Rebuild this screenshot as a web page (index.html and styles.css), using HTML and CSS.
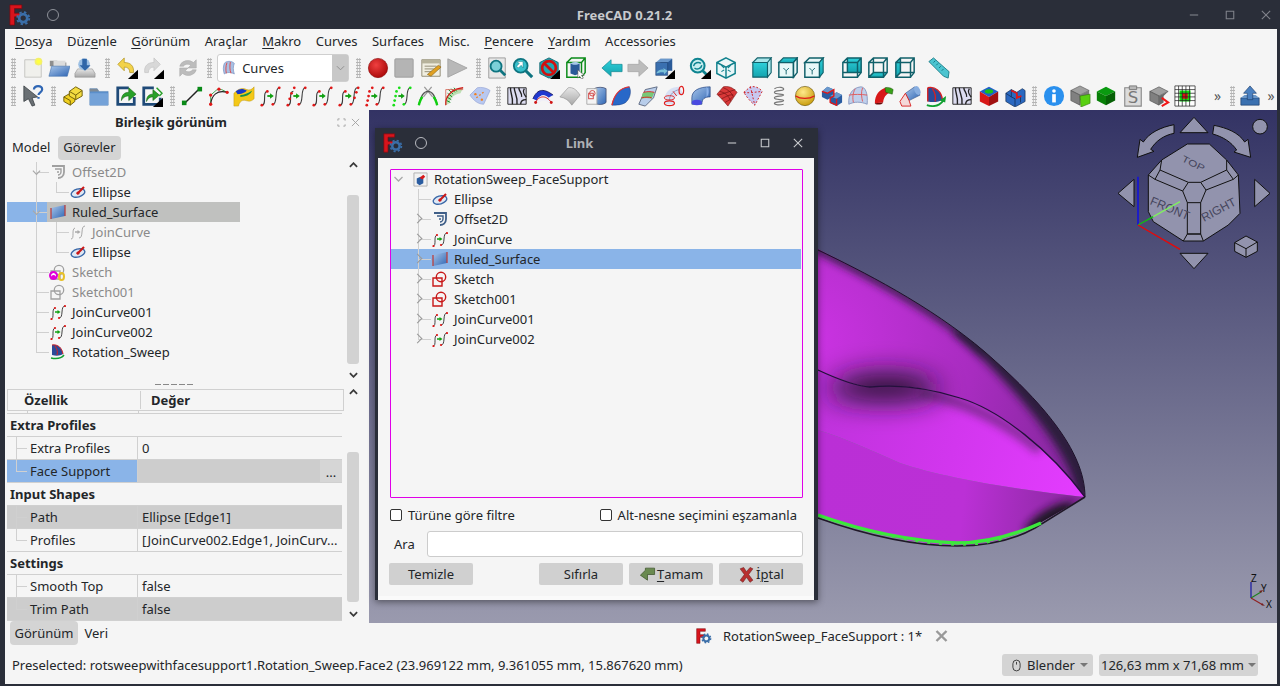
FILE: index.html

```html
<!DOCTYPE html>
<html lang="tr">
<head>
  <meta charset="UTF-8" />
  <title>FreeCAD 0.21.2</title>
  <link rel="stylesheet" href="styles.css">
</head>
<body>

  <!-- icon sheet, everything below reuses these -->
  <svg class="sheet" xmlns="http://www.w3.org/2000/svg">
    <defs>
      <linearGradient id="gBlue" x1="0" y1="0" x2="1" y2="1"><stop offset="0" stop-color="#a9c6ea"/><stop offset="1" stop-color="#2f66b4"/></linearGradient>
      <linearGradient id="gTeal" x1="0" y1="0" x2="0" y2="1"><stop offset="0" stop-color="#2ed0da"/><stop offset="1" stop-color="#14a3ae"/></linearGradient>
      <linearGradient id="gGrey" x1="0" y1="0" x2="0" y2="1"><stop offset="0" stop-color="#e6e6e6"/><stop offset="1" stop-color="#a8a8a8"/></linearGradient>
      <radialGradient id="gRed" cx=".4" cy=".35" r=".7"><stop offset="0" stop-color="#f04040"/><stop offset="1" stop-color="#a80808"/></radialGradient>
      <radialGradient id="gBall" cx=".4" cy=".3" r=".75"><stop offset="0" stop-color="#ffe98a"/><stop offset="1" stop-color="#c79a08"/></radialGradient>
    </defs>

    <symbol id="fc" viewBox="0 0 24 24">
      <path d="M1 1h13v4H6v5h7v4H6v9H1z" fill="#d8141c" stroke="#7a0a10" stroke-width=".8"/>
      <g transform="translate(15.5 15.5)"><circle r="4.4" fill="none" stroke="#3a6ea8" stroke-width="3"/><circle r="6.6" fill="none" stroke="#3a6ea8" stroke-width="2" stroke-dasharray="2.6 2.6"/></g>
    </symbol>

    <symbol id="new" viewBox="0 0 24 24"><path d="M3 3h16l2 2v17H3z" fill="#f0f0ec" stroke="#c4c4c0"/><circle cx="18" cy="5" r="4.2" fill="#f4f06a"/><circle cx="18" cy="5" r="2.4" fill="#ffff40"/></symbol>
    <symbol id="open" viewBox="0 0 24 24"><path d="M2 4h8l2 2h8v4H2z" fill="#8e8e8e"/><path d="M6 4h13v6H6z" fill="#dcdcdc"/><path d="M4 10h20l-3 11H1z" fill="url(#gBlue)" stroke="#3d6ca8" stroke-width=".6"/></symbol>
    <symbol id="save" viewBox="0 0 24 24"><path d="M4 13h16l3 5v4H1v-4z" fill="url(#gGrey)" stroke="#8a8a8a" stroke-width=".6"/><circle cx="11" cy="8" r="6.4" fill="#9cc0e4"/><path d="M9 2h5v7h4l-6 6-6-6h3z" fill="#2f66a8"/></symbol>
    <symbol id="undo" viewBox="0 0 24 24"><path d="M9 1 2 8l7 7v-4c4 0 6 2 6 6h4c1-7-3-11-10-11z" fill="#f2d24a" stroke="#a98a10" stroke-width=".7"/><path d="M24 14v10H13z"/></symbol>
    <symbol id="redo" viewBox="0 0 24 24"><path d="M13 1l7 7-7 7v-4c-4 0-6 2-6 6H3C2 10 6 6 13 6z" fill="#d8d8d8" stroke="#c0c0c0" stroke-width=".7"/><path d="M24 14v10H13z"/></symbol>
    <symbol id="refresh" viewBox="0 0 24 24"><path d="M3 10a9 8 0 0 1 15-4l3-3v9h-9l3-3a5 4 0 0 0-8 1zM21 14a9 8 0 0 1-15 4l-3 3v-9h9l-3 3a5 4 0 0 0 8-1z" fill="#bcbcbc" stroke="#a8a8a8" stroke-width=".6"/></symbol>
    <symbol id="curves" viewBox="0 0 24 24"><path d="M5 5C8 1 16 1 20 5c-2 5-2 10 0 16-5-3-11-3-15 0-2-5-2-11 0-16z" fill="#a8c0e4" stroke="#7890c0"/><path d="M9 4c-2 5-2 11-1 16M14 3c-1 6-1 12 1 17" fill="none" stroke="#e04848" stroke-width="1.4"/></symbol>
    <symbol id="record" viewBox="0 0 24 24"><circle cx="12" cy="12" r="10.5" fill="url(#gRed)" stroke="#8c0a0a" stroke-width=".7"/></symbol>
    <symbol id="stop" viewBox="0 0 24 24"><rect x="2" y="2" width="20" height="20" rx="1" fill="#b4b4b4" stroke="#9c9c9c"/></symbol>
    <symbol id="macro" viewBox="0 0 24 24"><path d="M2 3h20v18H2z" fill="#f0eee0" stroke="#8c8870"/><path d="M2 3h20v4H2z" fill="#b6b29a"/><path d="M5 10h13M5 13h10M5 16h8" stroke="#8c8870"/><path d="M8 19 20 9l3 2-11 10z" fill="#e0a020" stroke="#7a5810" stroke-width=".6"/></symbol>
    <symbol id="play" viewBox="0 0 24 24"><path d="M2 2l21 10L2 22z" fill="#b8b8b8" stroke="#a4a4a4"/></symbol>

    <symbol id="fit-all" viewBox="0 0 24 24"><path d="M3 1h18v22H3z" fill="#e8e8e8" stroke="#9a9a9a"/><circle cx="11" cy="10" r="6" fill="#7cd0d8" stroke="#0e7480" stroke-width="2"/><path d="M15 14l6 6" stroke="#0e7480" stroke-width="3"/></symbol>
    <symbol id="fit-sel" viewBox="0 0 24 24"><circle cx="9.5" cy="9.5" r="7.5" fill="#38c0cc" stroke="#0e7480" stroke-width="2"/><path d="M15 15l7 7" stroke="#0e7480" stroke-width="3.4"/><path d="M5 5h7v7l-2-3-3 3-2-2 3-3z" fill="#fff" stroke="#0e7480" stroke-width=".5"/></symbol>
    <symbol id="no-draw" viewBox="0 0 24 24"><path d="M12 1l10 5v12l-10 5-10-5V6z" fill="#1fa8b4" stroke="#0e6670"/><circle cx="12" cy="12" r="7.5" fill="none" stroke="#d01010" stroke-width="3"/><path d="M7 7l10 10" stroke="#d01010" stroke-width="3"/><path d="M24 14v10H13z"/></symbol>
    <symbol id="bbox" viewBox="0 0 24 24"><path d="M2 6h16v16H2zM2 6l5-5h15v16l-4 5M18 6l4-5" fill="none" stroke="#0a8a18" stroke-width="1.6"/><path d="M6 7h10v11l-5 2-5-2z" fill="#2a5a98"/><path d="M6 7c3-2 7-2 10 0-3 2-7 2-10 0z" fill="#a8c8e8"/><path d="M14 14v9l2-2 2 3 2-1-2-3h3z" fill="#fff" stroke="#444" stroke-width=".6"/></symbol>
    <symbol id="arr-l" viewBox="0 0 24 24"><path d="M1 12 11 3v5h12v8H11v5z" fill="url(#gTeal)" stroke="#1a8a96" stroke-width=".8"/></symbol>
    <symbol id="arr-r" viewBox="0 0 24 24"><path d="M23 12 13 3v5H1v8h12v5z" fill="#bcbcbc" stroke="#a4a4a4" stroke-width=".8"/></symbol>
    <symbol id="nav" viewBox="0 0 24 24"><path d="M8 2h13v13H8z" fill="#2a5a98"/><path d="M3 6l5-4h13l-5 4z" fill="#6a98cc"/><path d="M3 6h13v14H3z" fill="#3a70b0" stroke="#1a3a68" stroke-width=".6"/><path d="M4 17c2-3 5-4 8-3l-1-2 5 3-4 4v-2c-3-1-5 0-8 1z" fill="#7ac0d8"/><path d="M24 14v10H13z"/></symbol>
    <symbol id="sync" viewBox="0 0 24 24"><circle cx="9.5" cy="9.5" r="7.5" fill="#c8eef0" stroke="#0e8490" stroke-width="2.2"/><path d="M5 10a5 5 0 0 1 8-3M14 9a5 5 0 0 1-8 3" fill="none" stroke="#0e8490" stroke-width="1.6"/><path d="M15 15l6 6" stroke="#0e8490" stroke-width="3"/><path d="M24 14v10H13z"/></symbol>
    <symbol id="iso" viewBox="0 0 24 24"><path d="M12 1l10 5v12l-10 5L2 18V6zM2 6l10 5 10-5M12 11v12" fill="#e8f6f8" stroke="#10808c" stroke-width="1.6"/><path d="M7 9l3 3M17 9l-3 3M7 16l3-2M17 16l-3-2" stroke="#10808c" stroke-width="1.2"/></symbol>
    <symbol id="front" viewBox="0 0 24 24"><path d="M2 6h16v16H2z" fill="url(#gTeal)" stroke="#10606a" stroke-width="1.2"/><path d="M2 6l5-5h15l-4 5zM18 6l4-5v16l-4 5z" fill="#a8e6ea" stroke="#10606a" stroke-width="1.2"/></symbol>
    <symbol id="top" viewBox="0 0 24 24"><path d="M2 6h16v16H2z" fill="#e8f8f8" stroke="#10606a" stroke-width="1.6"/><path d="M2 6l5-5h15l-4 5z" fill="url(#gTeal)" stroke="#10606a" stroke-width="1.2"/><path d="M18 6l4-5v16l-4 5z" fill="#e8f8f8" stroke="#10606a" stroke-width="1.6"/><path d="M7 12l3 3M13 12l-3 3M10 15v4" stroke="#10606a"/></symbol>
    <symbol id="rgt" viewBox="0 0 24 24"><path d="M2 6h16v16H2zM2 6l5-5h15l-4 5z" fill="#e8f8f8" stroke="#10606a" stroke-width="1.6"/><path d="M18 6l4-5v16l-4 5z" fill="url(#gTeal)" stroke="#10606a" stroke-width="1.2"/><path d="M7 12l3 3M13 12l-3 3M10 15v4" stroke="#10606a"/></symbol>
    <symbol id="rear" viewBox="0 0 24 24"><path d="M7 1h15v16H7z" fill="url(#gTeal)"/><path d="M2 6h16v16H2zM2 6l5-5h15v16l-4 5M18 6l4-5M7 1v16H2M7 17h15" fill="none" stroke="#10606a" stroke-width="1.6"/></symbol>
    <symbol id="bot" viewBox="0 0 24 24"><path d="M2 22l5-5h15l-4 5z" fill="url(#gTeal)"/><path d="M2 6h16v16H2zM2 6l5-5h15v16l-4 5M18 6l4-5M7 1v16l-5 5M7 17h15" fill="none" stroke="#10606a" stroke-width="1.6"/></symbol>
    <symbol id="lft" viewBox="0 0 24 24"><path d="M2 6l5-5v16l-5 5z" fill="url(#gTeal)"/><path d="M2 6h16v16H2zM2 6l5-5h15v16l-4 5M18 6l4-5M7 1v16l-5 5M7 17h15" fill="none" stroke="#10606a" stroke-width="1.6"/></symbol>
    <symbol id="ruler" viewBox="0 0 24 24"><path d="M1 5l5-4 17 15-1 7-5-2z" fill="#4cc4d0" stroke="#0e7480" stroke-width=".9"/><path d="M6 6l2-2M9 9l2-2M12 12l2-2M15 15l2-2" stroke="#0e7480"/></symbol>

    <symbol id="help" viewBox="0 0 24 24"><path d="M2 1l15 12-6 1 3 8-3 1-4-8-5 3z" fill="#6a7074" stroke="#30363a" stroke-width=".8"/><path d="M13 5c0-5 9-5 9 0 0 3-4 3-4 6M18 13v2" fill="none" stroke="#2f66b4" stroke-width="2.4"/></symbol>
    <symbol id="part" viewBox="0 0 24 24"><path d="M2 13l7-4 5 3v6l-5 4-7-4z" fill="#f0d020" stroke="#6a5a08"/><path d="M8 7l7-5 7 4v6l-7 4-7-4z" fill="#f4dc40" stroke="#6a5a08"/><path d="M8 7l7 4 7-5M15 11v5M2 13l7 4v5" fill="none" stroke="#6a5a08"/></symbol>
    <symbol id="folder" viewBox="0 0 24 24"><path d="M2 4h8l2 3h10v15H2z" fill="#5b8fcb" stroke="#4a7ab0" stroke-width=".5"/><path d="M2 4h8l2 3H2z" fill="#7e8a96"/><path d="M2 9h20v13H2z" fill="#74a2d8"/></symbol>
    <symbol id="link" viewBox="0 0 24 24"><path d="M15 3H3v18h18v-8" fill="none" stroke="#1f4a78" stroke-width="3"/><path d="M7 17c0-6 3-9 8-9V3l8 7-8 7v-5c-3 0-6 1-8 5z" fill="#28a028" stroke="#14600f" stroke-width=".6"/></symbol>
    <symbol id="linksub" viewBox="0 0 24 24"><path d="M14 3H3v18h18v-7" fill="none" stroke="#1f4a78" stroke-width="3"/><path d="M6 18c0-6 3-8 7-8V5l7 6-7 6v-4c-3 0-5 1-7 5z" fill="#28a028" stroke="#14600f" stroke-width=".6"/><path d="M17 3l6 6-3 3" fill="none" stroke="#28a028" stroke-width="1.6"/><path d="M24 14v10H13z"/></symbol>

    <symbol id="line" viewBox="0 0 24 24"><path d="M4 20 20 4" stroke="#222" stroke-width="1.6"/><rect x="1" y="17" width="5" height="5" fill="#0a8a18"/><rect x="18" y="2" width="5" height="5" fill="#0a8a18"/></symbol>
    <symbol id="arc" viewBox="0 0 24 24"><path d="M4 21V11L11 5h5l6 3" fill="none" stroke="#0a8a18" stroke-width=".8"/><path d="M4 21C5 11 11 5 22 8" fill="none" stroke="#222" stroke-width="1.2"/><g fill="#e01818"><circle cx="4" cy="21" r="1.8"/><circle cx="4" cy="11" r="1.8"/><circle cx="13" cy="4.5" r="1.8"/><circle cx="22" cy="8" r="1.8"/></g></symbol>
    <symbol id="multi" viewBox="0 0 24 24"><path d="M1 9c6-6 10-6 14-4 3 1 6 0 8-3v13c-3 3-5 3-9 2-4-1-7 1-8 6H1z" fill="#f4c818" stroke="#b89010" stroke-width=".5"/><path d="M3 7c5-4 8-3 12-1-2 3-7 4-10 4z" fill="#1838c8"/><path d="M8 11c4 0 8-2 13-5-2 5-8 7-13 7z" fill="#1a9048"/></symbol>

    <symbol id="s-arrow" viewBox="0 0 24 24"><path d="M8 12h5" stroke="#10a010" stroke-width="2"/><path d="M11 9l4 3-4 3z" fill="#10a010"/></symbol>
    <symbol id="s-curves" viewBox="0 0 24 24"><path d="M2 22c6 0 0-15 6-15M14 21c6 0 1-18 7-18" fill="none" stroke="#3a3a3a" stroke-width="1.2"/><use href="#s-arrow"/></symbol>
    <symbol id="join" viewBox="0 0 24 24"><use href="#s-curves"/><g fill="#e01818"><circle cx="2" cy="22" r="1.5"/><circle cx="8" cy="7" r="1.5"/><circle cx="14" cy="21" r="1.5"/><circle cx="21" cy="3" r="1.5"/></g></symbol>
    <symbol id="join-b" viewBox="0 0 24 24"><use href="#s-curves"/><g fill="#e01818"><circle cx="2" cy="22" r="1.5"/><circle cx="4" cy="15" r="1.5"/><circle cx="6" cy="9" r="1.5"/><circle cx="9" cy="3" r="1.5"/><circle cx="14" cy="21" r="1.5"/><circle cx="21" cy="3" r="1.5"/></g></symbol>
    <symbol id="join-c" viewBox="0 0 24 24"><use href="#s-curves"/><g fill="#e01818"><circle cx="2" cy="22" r="1.5"/><circle cx="8" cy="7" r="1.5"/><circle cx="14" cy="21" r="1.5"/><circle cx="18" cy="14" r="1.5"/><circle cx="20" cy="8" r="1.5"/><circle cx="22" cy="3" r="1.5"/></g></symbol>
    <symbol id="join-e" viewBox="0 0 24 24"><path d="M14 21c6 0 1-18 7-18" fill="none" stroke="#3a3a3a" stroke-width="1.2"/><use href="#s-arrow"/><g fill="#e01818"><circle cx="3" cy="22" r="1.5"/><circle cx="4" cy="17" r="1.5"/><circle cx="5" cy="12" r="1.5"/><circle cx="6" cy="7" r="1.5"/><circle cx="9" cy="3" r="1.5"/><circle cx="14" cy="21" r="1.5"/><circle cx="21" cy="3" r="1.5"/></g></symbol>
    <symbol id="join-f" viewBox="0 0 24 24"><path d="M14 21c6 0 1-18 7-18" fill="none" stroke="#3a3a3a" stroke-width="1.2"/><use href="#s-arrow"/><g fill="#18e018"><circle cx="3" cy="22" r="1.5"/><circle cx="4" cy="17" r="1.5"/><circle cx="5" cy="12" r="1.5"/><circle cx="6" cy="7" r="1.5"/><circle cx="9" cy="3" r="1.5"/><circle cx="14" cy="21" r="1.5"/><circle cx="21" cy="3" r="1.5"/></g></symbol>

    <symbol id="trim" viewBox="0 0 24 24"><path d="M8 2l9 11M16 2 7 13" stroke="#9a9a9a" stroke-width="1.4"/><path d="M2 22C4 12 8 7 12 7s8 5 10 15" fill="none" stroke="#555" stroke-width="1.4"/><path d="M2 22c1-4 2-7 4-9M22 22c-1-4-2-7-4-9" fill="none" stroke="#10d010" stroke-width="2.6"/></symbol>
    <symbol id="blend" viewBox="0 0 24 24"><path d="M3 22C2 12 10 4 22 3l-3 6c-7 1-11 5-12 11z" fill="#bde0b4"/><path d="M6 5l5 5M9 4l4 4M12 3l3 4M5 9l5 4M4 13l5 3M4 17l4 2" stroke="#0a8a18"/><path d="M3 22C2 12 10 4 22 3" fill="none" stroke="#d01818" stroke-width="1.4"/><path d="M3 5v17M3 5h19" fill="none" stroke="#d05040" stroke-width=".8"/></symbol>
    <symbol id="patch" viewBox="0 0 24 24"><path d="M1 11 9 3c5-1 10 0 14 3l-7 15c-6 0-11-4-15-10z" fill="#b8c8f0" stroke="#8898d0" stroke-width=".6"/><path d="M8 14l9-7" stroke="#f08020" stroke-width="1.4" stroke-dasharray="2 2"/><circle cx="7" cy="10" r="1.3" fill="#f08020"/><circle cx="14" cy="16" r="1.3" fill="#f08020"/></symbol>
    <symbol id="zebra" viewBox="0 0 24 24"><path d="M2 3h20v18H2z" fill="#dcdcf0" stroke="#222"/><path d="M5 3c-1 5 3 8 2 18M9 3c0 6 4 8 3 18M14 3c0 4 4 6 3 10M20 4c-2 3 0 7 2 9M16 21c0-4 3-5 6-5" fill="none" stroke="#222" stroke-width="1.5"/></symbol>
    <symbol id="arch" viewBox="0 0 24 24"><path d="M1 15C5 6 11 2 23 11L18 14C14 10 9 10 5 17z" fill="#2038d0"/><path d="M1 15C5 6 11 2 23 11" fill="none" stroke="#1a1a60"/><path d="M5 17C9 10 14 10 18 14l4 3-3 3C14 16 10 16 7 21z" fill="#f0f0f8"/><path d="M4 19C7 12 15 10 21 19" fill="none" stroke="#d01818"/><circle cx="4" cy="19" r="1.6" fill="#d01818"/><circle cx="21" cy="19" r="1.6" fill="#d01818"/></symbol>
    <symbol id="shell" viewBox="0 0 24 24"><path d="M1 13 10 3c5-1 9 2 13 8l-9 11C11 17 7 14 1 13z" fill="url(#gGrey)" stroke="#8a8a8a" stroke-width=".6"/></symbol>
    <symbol id="cyl-sk" viewBox="0 0 24 24"><path d="M10 4c3-2 10-2 13 0v15c-3 3-10 3-13 0z" fill="url(#gBlue)" stroke="#404868" stroke-width=".8"/><path d="M2 4h11v17H2z" fill="#f4f4f4" stroke="#a8a8a8"/><rect x="4" y="9" width="5" height="6" fill="none" stroke="#d04040"/><circle cx="8" cy="9" r="3" fill="none" stroke="#d04040"/></symbol>
    <symbol id="loft" viewBox="0 0 24 24"><path d="M1 22C3 12 9 3 20 2c3 6 0 14-4 17-4 3-10 3-15 3z" fill="#2868c8" stroke="#183878" stroke-width=".5"/><path d="M1 22C3 12 9 3 20 2" fill="none" stroke="#e83030" stroke-width="1.4"/></symbol>
    <symbol id="sweep2" viewBox="0 0 24 24"><path d="M2 21 9 5l13-3-4 12-9 9z" fill="#b8cdea" stroke="#5c6880"/><path d="M6 9c4-2 9-2 13-1l-3 7c-4-1-8-1-11 0z" fill="#78c878"/><path d="M5 14c4-1 8-1 11 0M7 8c4-1 8-1 12 0" fill="none" stroke="#e02020"/></symbol>
    <symbol id="pipe" viewBox="0 0 24 24"><path d="M2 15C2 7 9 2 18 2l4 8c-6 0-10 3-10 7v4H2z" fill="#d8e0f4"/><path d="M7 17C7 10 12 6 18 5" fill="none" stroke="#8898c0"/><ellipse cx="20" cy="6" rx="2.5" ry="4.5" fill="none" stroke="#e02020" stroke-width="1.3"/><ellipse cx="7" cy="20" rx="5.5" ry="2.6" fill="none" stroke="#e02020" stroke-width="1.3"/><ellipse cx="7" cy="14" rx="5.5" ry="2.3" fill="none" stroke="#e02020"/><path d="M11 7l4 5" stroke="#e02020"/></symbol>
    <symbol id="pipe2" viewBox="0 0 24 24"><path d="M2 14C2 6 10 2 22 2v11c-6 0-9 2-9 8H2z" fill="url(#gBlue)" stroke="#1a3a78" stroke-width=".7"/><ellipse cx="7.5" cy="19" rx="5.5" ry="3" fill="#4a4ae0"/><path d="M18 2c3 2 3 9 0 11" fill="#8ab0e8"/></symbol>
    <symbol id="gridsurf" viewBox="0 0 24 24"><path d="M1 10 8 2c5-1 10 0 15 6l-10 15C9 18 5 14 1 10z" fill="#d83838" stroke="#701010" stroke-width=".6"/><path d="M4 7c5 1 10 4 12 11M8 3c5 2 9 5 11 10M2 11c5-1 13-4 19-6M6 15c5-2 8-5 13-4M10 19c3-2 6-3 8-6" fill="none" stroke="#701010" stroke-width=".7"/></symbol>
    <symbol id="patch2" viewBox="0 0 24 24"><path d="M2 8 9 2c5-1 10 1 13 5l-8 15C9 18 5 13 2 8z" fill="#c8c8f0"/><path d="M2 8c5 1 10 0 20-1M9 2c2 6 3 13 5 20" fill="none" stroke="#d01818" stroke-dasharray="2 2"/><path d="M2 8 9 2c5-1 10 1 13 5l-8 15C9 18 5 13 2 8z" fill="none" stroke="#d01818" stroke-dasharray="2 2"/></symbol>
    <symbol id="spring" viewBox="0 0 24 24"><path d="M7 4c5-3 11-1 10 1s-10 0-10 3 10 1 10 3-10 0-10 3 10 1 10 3-10 1-10 3 6 2 10 1" fill="none" stroke="#777" stroke-width="1.3"/></symbol>
    <symbol id="ball" viewBox="0 0 24 24"><circle cx="12" cy="12" r="10.5" fill="url(#gBall)" stroke="#6a5408" stroke-width=".7"/><path d="M1.8 12c5 3.5 15 3.5 20.4 0" fill="none" stroke="#e01818" stroke-width="1.4"/></symbol>
    <symbol id="cubes" viewBox="0 0 24 24"><path d="M1 7l6-5 7 3v7l-7 4-6-3z" fill="#2a5ca0"/><path d="M10 12l7-4 6 3v8l-6 4-7-3z" fill="#2a5ca0"/><path d="M1 7l6-5 7 3-7 4zM10 12l7-4 6 3-6 4z" fill="#6a98cc"/><path d="M1 7l6 2 7-4v7l-4 2v5l7 3v-7" fill="none" stroke="#e01818" stroke-width="1.5"/></symbol>
    <symbol id="dome" viewBox="0 0 24 24"><path d="M2 21C1 10 6 3 15 2c5 0 8 7 7 19-7-3-14-3-20 0z" fill="#c0d0ec" stroke="#8898c0"/><path d="M9 4c-3 5-3 11-2 15M17 3c-2 5-1 11 0 15M2 11c6-1 13-1 20 0" fill="none" stroke="#e05858"/></symbol>
    <symbol id="elbow" viewBox="0 0 24 24"><path d="M2 20C2 11 7 4 15 3l6 5c-5 0-9 4-10 11z" fill="#d81818"/><path d="M13 3c3-1 7 0 9 2l-1 5-7-2z" fill="#38a018" stroke="#184808" stroke-width=".5"/><path d="M2 20c0 2 8 2 9-1" fill="#680808"/></symbol>
    <symbol id="funnel" viewBox="0 0 24 24"><path d="M7 9l10-7 6 9-12 6z" fill="url(#gBlue)" stroke="#2a4a80" stroke-width=".6"/><ellipse cx="20" cy="6" rx="3" ry="5" fill="#88aee0" transform="rotate(-25 20 6)"/><path d="M1 18 7 9l4 8 2 6H3z" fill="#f4d8d8" stroke="#d82020"/></symbol>
    <symbol id="sweepicon" viewBox="0 0 24 24"><path d="M3 3c8-2 15 4 16 13-4 3-11 3-16 2z" fill="#2a4a98"/><path d="M3 3c8-2 15 4 16 13M8 4c3 4 4 9 3 14M3 3v15" fill="none" stroke="#d82020" stroke-width="1.5"/><path d="M2 22c7 2 14 1 18-5" fill="none" stroke="#10a030" stroke-width="2"/><path d="M23 12l-1 7-6-2z" fill="#10a030"/></symbol>
    <symbol id="tricolor" viewBox="0 0 24 24"><path d="M2 7l10-5 10 5-10 6z" fill="#2060c8"/><ellipse cx="12" cy="7" rx="4.5" ry="2.3" fill="#18c018"/><path d="M2 7l10 6v10L2 18z" fill="#d81818"/><path d="M22 7l-10 6v10l10-5z" fill="#a01010"/></symbol>
    <symbol id="blocks" viewBox="0 0 24 24"><path d="M2 9l6-4 6 3 6-4 3 2v12l-11 6L2 18z" fill="#2a68c0" stroke="#10284c" stroke-width=".7"/><path d="M8 5v8l4 2v8M14 8v6l4-2v7M8 13 2 9" fill="none" stroke="#10284c" stroke-width=".8"/><path d="M8 6l6 3v5l5-2" fill="none" stroke="#e01818" stroke-width="2"/></symbol>
    <symbol id="info" viewBox="0 0 24 24"><circle cx="12" cy="12" r="11" fill="#2a90ee"/><circle cx="12" cy="6.5" r="2" fill="#fff"/><path d="M10 10h4v9h-4z" fill="#fff"/></symbol>
    <symbol id="g-plane" viewBox="0 0 24 24"><path d="M2 6l10-5 10 5-10 5z" fill="#a0a0a0" stroke="#444" stroke-width=".6"/><path d="M2 6l10 5v11L2 17z" fill="#808080" stroke="#444" stroke-width=".6"/><path d="M12 11l10-5v6l-10 5z" fill="#7a7a7a"/><path d="M12 12l11-2v10l-10 4z" fill="#58d010" stroke="#2c7008" stroke-width=".6"/></symbol>
    <symbol id="g-box" viewBox="0 0 24 24"><path d="M2 7l10-5 10 5-10 5z" fill="#0a9a10"/><path d="M2 7l10 5v10L2 17z" fill="#088008"/><path d="M22 7 12 12v10l10-5z" fill="#066006"/></symbol>
    <symbol id="g-sel" viewBox="0 0 24 24"><path d="M2 7l10-5 10 5-10 5z" fill="#a0a0a0" stroke="#444" stroke-width=".6"/><path d="M2 7l10 5v10L2 17z" fill="#808080" stroke="#444" stroke-width=".6"/><path d="M22 7 12 12v10l5-3V12z" fill="#6a6a6a"/><path d="M15 14l7 5-7 4" fill="none" stroke="#f01818" stroke-width="2.2"/></symbol>
    <symbol id="pixels" viewBox="0 0 24 24"><path d="M1 1h22v22H1z" fill="#fff"/><path d="M6 6h12v12H6z" fill="#10e010"/><path d="M9 9h6v6H9z" fill="#e01010"/><path d="M1 5h22M1 9h22M1 13h22M1 17h22M5 1v22M9 1v22M13 1v22M17 1v22M1 1h22v22H1z" fill="none" stroke="#222" stroke-width=".8"/></symbol>
    <symbol id="export" viewBox="0 0 24 24"><path d="M2 14h20v8H2z" fill="#3a70b0" stroke="#1a3a68" stroke-width=".7"/><path d="M2 14l4-3h12l4 3z" fill="#6a98cc"/><path d="M12 1l7 8h-4v7H9V9H5z" fill="#4a80c0" stroke="#1a3a68" stroke-width=".7"/></symbol>

    <symbol id="ellipse" viewBox="0 0 16 16"><ellipse cx="8" cy="9" rx="7" ry="4" transform="rotate(-16 8 9)" fill="#dfe8f4" stroke="#3a68a8" stroke-width="1.4"/><path d="M7 10l7-7" stroke="#c81818" stroke-width="2.2"/><circle cx="8" cy="9" r="1.6" fill="#c81818"/></symbol>
    <symbol id="offset" viewBox="0 0 16 16"><path d="M2 2h12v6c0 4-3 6-6 6" fill="none" stroke="#3f5f88" stroke-width="1.8"/><path d="M5 5h6v3c0 2-2 3-3 3M7 8h2" fill="none" stroke="#3f5f88" stroke-width="1.4"/></symbol>
    <symbol id="offset-g" viewBox="0 0 16 16"><path d="M2 2h12v6c0 4-3 6-6 6" fill="none" stroke="#a0a0a0" stroke-width="1.8"/><path d="M5 5h6v3c0 2-2 3-3 3M7 8h2" fill="none" stroke="#a0a0a0" stroke-width="1.4"/></symbol>
    <symbol id="ruled" viewBox="0 0 16 16"><path d="M1 4l14-3v11L1 15z" fill="url(#gBlue)"/><path d="M1 4v11M15 1v11" stroke="#b84040" stroke-width="1.3"/></symbol>
    <symbol id="joint" viewBox="0 0 16 16"><path d="M1 15c4 0 0-10 4-11M9 14c5 0 1-12 6-12" fill="none" stroke="#444"/><path d="M5 8h4" stroke="#10a010" stroke-width="1.5"/><path d="M7.5 6l3 2-3 2z" fill="#10a010"/><g fill="#e01818"><circle cx="1.5" cy="15" r="1.1"/><circle cx="5" cy="4" r="1.1"/><circle cx="9" cy="14" r="1.1"/><circle cx="15" cy="2" r="1.1"/></g></symbol>
    <symbol id="joint-g" viewBox="0 0 16 16"><path d="M1 15c4 0 0-10 4-11M9 14c5 0 1-12 6-12" fill="none" stroke="#a8a8a8"/><path d="M5 8h4" stroke="#a8a8a8" stroke-width="1.5"/><path d="M7.5 6l3 2-3 2z" fill="#a8a8a8"/></symbol>
    <symbol id="sketch-g" viewBox="0 0 16 16"><path d="M1 7h9v8H1z" fill="#f5f5f5" stroke="#a0a0a0" stroke-width="1.3"/><circle cx="9" cy="6" r="4.7" fill="none" stroke="#a0a0a0" stroke-width="1.3"/></symbol>
    <symbol id="sketch-r" viewBox="0 0 16 16"><path d="M1 7h9v8H1z" fill="#f5f5f5" stroke="#c81818" stroke-width="1.4"/><circle cx="9" cy="6" r="4.7" fill="none" stroke="#c81818" stroke-width="1.4"/></symbol>
    <symbol id="sweep16" viewBox="0 0 16 16"><path d="M2 1c6-1 10 3 11 9-3 2-7 2-11 1z" fill="#2a4a98"/><path d="M2 1c6-1 10 3 11 9M5 2c2 3 3 6 2 9" fill="none" stroke="#d82020"/><path d="M1 14c5 1 10 1 13-3" fill="none" stroke="#10a030" stroke-width="1.5"/></symbol>
    <symbol id="doc" viewBox="0 0 16 16"><path d="M1 1h14v14H1z" fill="#f2f2f2" stroke="#b0b0b0"/><path d="M4 7l4-2 3 2v5l-4 2-3-2z" fill="#2a5ca0"/><path d="M7 6l4-3 2 2-3 3z" fill="#d81818"/></symbol>
    <symbol id="ok" viewBox="0 0 24 24"><path d="M9 3h13v9H12v8L2 13l7-7z" fill="#6a8a50" stroke="#3a5028"/></symbol>
    <symbol id="cancel" viewBox="0 0 24 24"><path d="M3 4l5-2 4 6 5-6 4 2-6 8 6 8-4 3-5-7-5 7-4-3 6-8z" fill="#b83030" stroke="#601010" stroke-width=".7"/></symbol>
  </svg>

  <header class="titlebar">
    <svg class="logo"><use href="#fc"/></svg>
    <span class="circle-btn"></span>
    <span class="title-text">FreeCAD 0.21.2</span>
    <div class="win-btns">
      <svg class="wb" viewBox="0 0 12 12"><path d="M1 6h10"/></svg>
      <svg class="wb" viewBox="0 0 12 12"><path d="M1.5 1.5h9v9h-9z"/></svg>
      <svg class="wb" viewBox="0 0 12 12"><path d="M1 1l10 10M11 1 1 11"/></svg>
    </div>
  </header>

  <div class="app">
    <nav class="menubar">
      <span><u>D</u>osya</span>
      <span>Düz<u>e</u>nle</span>
      <span><u>G</u>örünüm</span>
      <span>Araçlar</span>
      <span><u>M</u>akro</span>
      <span>Curves</span>
      <span>Surfaces</span>
      <span>Misc.</span>
      <span><u>P</u>encere</span>
      <span><u>Y</u>ardım</span>
      <span>Accessories</span>
    </nav>

    <div class="toolbar tb1">
      <i class="grip"></i>
      <svg class="ic"><use href="#new"/></svg>
      <svg class="ic"><use href="#open"/></svg>
      <svg class="ic"><use href="#save"/></svg>
      <i class="grip"></i>
      <svg class="ic"><use href="#undo"/></svg>
      <svg class="ic"><use href="#redo"/></svg>
      <i class="sp9"></i>
      <svg class="ic"><use href="#refresh"/></svg>
      <i class="grip"></i>
      <div class="wb-combo">
        <svg class="combo-ic"><use href="#curves"/></svg>
        <span class="combo-text">Curves</span>
        <span class="combo-arrow"><svg viewBox="0 0 10 6"><path d="M1 1l4 4 4-4"/></svg></span>
      </div>
      <i class="grip"></i>
      <svg class="ic"><use href="#record"/></svg>
      <svg class="ic"><use href="#stop"/></svg>
      <svg class="ic"><use href="#macro"/></svg>
      <svg class="ic"><use href="#play"/></svg>
      <i class="grip gn"></i>
      <svg class="ic"><use href="#fit-all"/></svg>
      <svg class="ic"><use href="#fit-sel"/></svg>
      <svg class="ic"><use href="#no-draw"/></svg>
      <svg class="ic"><use href="#bbox"/></svg>
      <i class="sp10"></i>
      <svg class="ic"><use href="#arr-l"/></svg>
      <svg class="ic"><use href="#arr-r"/></svg>
      <svg class="ic"><use href="#nav"/></svg>
      <i class="sp10"></i>
      <svg class="ic"><use href="#sync"/></svg>
      <svg class="ic"><use href="#iso"/></svg>
      <i class="sp9"></i>
      <svg class="ic"><use href="#front"/></svg>
      <svg class="ic"><use href="#top"/></svg>
      <svg class="ic"><use href="#rgt"/></svg>
      <i class="sp12"></i>
      <svg class="ic"><use href="#rear"/></svg>
      <svg class="ic"><use href="#bot"/></svg>
      <svg class="ic"><use href="#lft"/></svg>
      <i class="sp8"></i>
      <svg class="ic"><use href="#ruler"/></svg>
    </div>

    <div class="toolbar tb2">
      <i class="grip"></i>
      <svg class="ic"><use href="#help"/></svg>
      <i class="grip gs"></i>
      <svg class="ic"><use href="#part"/></svg>
      <svg class="ic"><use href="#folder"/></svg>
      <svg class="ic"><use href="#link"/></svg>
      <svg class="ic"><use href="#linksub"/></svg>
      <i class="grip gs"></i>
      <svg class="ic"><use href="#line"/></svg>
      <svg class="ic"><use href="#arc"/></svg>
      <svg class="ic"><use href="#multi"/></svg>
      <svg class="ic"><use href="#join"/></svg>
      <svg class="ic"><use href="#join-b"/></svg>
      <svg class="ic"><use href="#join"/></svg>
      <svg class="ic"><use href="#join-c"/></svg>
      <svg class="ic"><use href="#join-e"/></svg>
      <svg class="ic"><use href="#join-f"/></svg>
      <svg class="ic"><use href="#trim"/></svg>
      <svg class="ic"><use href="#blend"/></svg>
      <svg class="ic"><use href="#patch"/></svg>
      <i class="grip gm"></i>
      <svg class="ic"><use href="#zebra"/></svg>
      <svg class="ic"><use href="#arch"/></svg>
      <svg class="ic"><use href="#shell"/></svg>
      <svg class="ic"><use href="#cyl-sk"/></svg>
      <svg class="ic"><use href="#loft"/></svg>
      <svg class="ic"><use href="#sweep2"/></svg>
      <svg class="ic"><use href="#pipe"/></svg>
      <svg class="ic"><use href="#pipe2"/></svg>
      <svg class="ic"><use href="#gridsurf"/></svg>
      <svg class="ic"><use href="#patch2"/></svg>
      <svg class="ic"><use href="#spring"/></svg>
      <svg class="ic"><use href="#ball"/></svg>
      <svg class="ic"><use href="#cubes"/></svg>
      <svg class="ic"><use href="#dome"/></svg>
      <svg class="ic"><use href="#elbow"/></svg>
      <svg class="ic"><use href="#funnel"/></svg>
      <svg class="ic"><use href="#sweepicon"/></svg>
      <svg class="ic"><use href="#zebra"/></svg>
      <svg class="ic"><use href="#tricolor"/></svg>
      <svg class="ic"><use href="#blocks"/></svg>
      <i class="grip gq"></i>
      <svg class="ic"><use href="#info"/></svg>
      <svg class="ic"><use href="#g-plane"/></svg>
      <svg class="ic"><use href="#g-box"/></svg>
      <svg class="ic" viewBox="0 0 24 24">
        <path d="M3 3h18v20H3z" fill="#dcdcdc" stroke="#888" stroke-width="1.2"/>
        <path d="M8 1h8v4H8z" fill="#b8b8b8" stroke="#777"/>
        <text x="12" y="20" text-anchor="middle" class="big-s">S</text>
      </svg>
      <svg class="ic"><use href="#g-sel"/></svg>
      <svg class="ic"><use href="#pixels"/></svg>
      <span class="more m1">»</span>
      <i class="grip gt"></i>
      <svg class="ic"><use href="#export"/></svg>
      <span class="more">»</span>
    </div>

    <div class="work">
      <aside class="dock">
        <div class="dock-title">
          <span>Birleşik görünüm</span>
          <svg class="dock-btn" viewBox="0 0 10 10"><path d="M1 3V1h2M7 1h2v2M9 7v2H7M3 9H1V7"/></svg>
          <svg class="dock-btn" viewBox="0 0 10 10"><path d="M1 1l8 8M9 1 1 9"/></svg>
        </div>
        <div class="tabs top-tabs">
          <span class="tab">Model</span>
          <span class="tab active">Görevler</span>
        </div>

        <div class="pane tree-pane">
          <div class="tree">
            <div class="row lv1 first">
              <span class="gutter"><svg class="chev" viewBox="0 0 10 10"><path d="M1 3l4 4 4-4"/></svg></span>
              <span class="cell muted"><svg class="ti"><use href="#offset-g"/></svg>Offset2D</span>
            </div>
            <div class="row lv2 end">
              <span class="gutter"></span>
              <span class="cell"><svg class="ti"><use href="#ellipse"/></svg>Ellipse</span>
            </div>
            <div class="row lv1 picked">
              <span class="gutter"><svg class="chev" viewBox="0 0 10 10"><path d="M1 3l4 4 4-4"/></svg></span>
              <span class="cell"><svg class="ti"><use href="#ruled"/></svg>Ruled_Surface</span>
            </div>
            <div class="row lv2">
              <span class="gutter"></span>
              <span class="cell muted"><svg class="ti"><use href="#joint-g"/></svg>JoinCurve</span>
            </div>
            <div class="row lv2 end">
              <span class="gutter"></span>
              <span class="cell"><svg class="ti"><use href="#ellipse"/></svg>Ellipse</span>
            </div>
            <div class="row lv1">
              <span class="gutter"></span>
              <span class="cell muted">
                <span class="ti-stack">
                  <svg class="ti"><use href="#sketch-g"/></svg>
                  <span class="vis-badge"></span>
                  <span class="vis-ring"></span>
                </span>Sketch</span>
            </div>
            <div class="row lv1">
              <span class="gutter"></span>
              <span class="cell muted"><svg class="ti"><use href="#sketch-g"/></svg>Sketch001</span>
            </div>
            <div class="row lv1">
              <span class="gutter"></span>
              <span class="cell"><svg class="ti"><use href="#joint"/></svg>JoinCurve001</span>
            </div>
            <div class="row lv1">
              <span class="gutter"></span>
              <span class="cell"><svg class="ti"><use href="#joint"/></svg>JoinCurve002</span>
            </div>
            <div class="row lv1 end">
              <span class="gutter"></span>
              <span class="cell"><svg class="ti"><use href="#sweep16"/></svg>Rotation_Sweep</span>
            </div>
          </div>
          <div class="scroll s-tree">
            <svg class="sc-arrow" viewBox="0 0 10 6"><path d="M1 5l4-4 4 4"/></svg>
            <span class="thumb"></span>
            <svg class="sc-arrow" viewBox="0 0 10 6"><path d="M1 1l4 4 4-4"/></svg>
          </div>
        </div>

        <div class="splitter"><span></span></div>

        <div class="pane prop-pane">
          <div class="props">
            <div class="prop-head"><span class="h1">Özellik</span><span class="h2">Değer</span></div>
            <div class="prop-sliver"></div>
            <div class="prop-group">Extra Profiles</div>
            <div class="prop-row"><span class="p-name">Extra Profiles</span><span class="p-val">0</span></div>
            <div class="prop-row alt last"><span class="p-name sel">Face Support</span><span class="p-val"><b class="dots">...</b></span></div>
            <div class="prop-group">Input Shapes</div>
            <div class="prop-row alt"><span class="p-name">Path</span><span class="p-val">Ellipse [Edge1]</span></div>
            <div class="prop-row last"><span class="p-name">Profiles</span><span class="p-val">[JoinCurve002.Edge1, JoinCurv...</span></div>
            <div class="prop-group">Settings</div>
            <div class="prop-row"><span class="p-name">Smooth Top</span><span class="p-val">false</span></div>
            <div class="prop-row alt last"><span class="p-name">Trim Path</span><span class="p-val">false</span></div>
          </div>
          <div class="scroll s-prop">
            <svg class="sc-arrow" viewBox="0 0 10 6"><path d="M1 5l4-4 4 4"/></svg>
            <span class="thumb"></span>
            <svg class="sc-arrow" viewBox="0 0 10 6"><path d="M1 1l4 4 4-4"/></svg>
          </div>
        </div>

        <div class="tabs bottom-tabs">
          <span class="tab active">Görünüm</span>
          <span class="tab">Veri</span>
        </div>
      </aside>

      <section class="center">
        <div class="view">
          <svg class="shape" viewBox="369 110 908 513">
            <defs>
              <radialGradient id="lobeTop" gradientUnits="userSpaceOnUse" cx="810" cy="340" r="330">
                <stop offset="0" stop-color="#cb33e3"/><stop offset=".5" stop-color="#a82cc0"/><stop offset="1" stop-color="#7a2692"/>
              </radialGradient>
              <linearGradient id="lobeMid" gradientUnits="userSpaceOnUse" x1="818" y1="420" x2="1085" y2="490">
                <stop offset="0" stop-color="#bf32dc"/><stop offset=".5" stop-color="#d236ee"/><stop offset="1" stop-color="#e43cff"/>
              </linearGradient>
              <linearGradient id="lobeLow" gradientUnits="userSpaceOnUse" x1="818" y1="470" x2="1085" y2="500">
                <stop offset="0" stop-color="#ba2fd6"/><stop offset=".55" stop-color="#bb30d6"/><stop offset="1" stop-color="#86289c"/>
              </linearGradient>
              <filter id="blur14" x="-80%" y="-250%" width="260%" height="600%"><feGaussianBlur stdDeviation="14"/></filter>
              <filter id="blur6" x="-30%" y="-50%" width="160%" height="200%"><feGaussianBlur stdDeviation="4"/></filter>
              <clipPath id="clipTop"><path d="M800 240C860 270 930 305 985 352C1040 400 1085 450 1085 497C1050 450 1000 410 960 398C920 385 890 385 870 387C850 385 830 375 800 363Z"/></clipPath>
              <clipPath id="clipMid"><path d="M800 363C830 375 850 385 870 387C890 385 920 385 960 398C1000 410 1050 450 1085 497C1030 491 950 480 900 463C870 450 840 435 800 425Z"/></clipPath>
              <clipPath id="clipLow"><path d="M800 425C840 435 870 450 900 463C950 480 1030 491 1085 497L1040 523C1010 540 985 545 957 545C910 545 860 530 800 510Z"/></clipPath>
            </defs>
            <g clip-path="url(#clipTop)">
              <rect x="800" y="230" width="300" height="280" fill="url(#lobeTop)"/>
              <path d="M800 240C860 270 930 305 985 352" fill="none" stroke="#2a1a3a" stroke-width="8" filter="url(#blur6)"/>
              <path d="M960 326C1010 370 1085 450 1085 497" fill="none" stroke="#2a1a3a" stroke-width="18" filter="url(#blur6)"/>
              <ellipse cx="885" cy="390" rx="52" ry="16" fill="#1e1428" filter="url(#blur14)"/>
            </g>
            <g clip-path="url(#clipMid)">
              <rect x="800" y="360" width="300" height="150" fill="url(#lobeMid)"/>
              <ellipse cx="885" cy="388" rx="58" ry="14" fill="#1e1428" filter="url(#blur14)"/>
              <path d="M920 392C970 402 1010 425 1040 450" fill="none" stroke="#40204c" stroke-width="10" filter="url(#blur6)" opacity=".55"/>
            </g>
            <g clip-path="url(#clipLow)">
              <rect x="800" y="420" width="300" height="130" fill="url(#lobeLow)"/>
              <ellipse cx="1050" cy="518" rx="28" ry="9" transform="rotate(-30 1050 518)" fill="#1a1222" filter="url(#blur6)"/>
            </g>
            <path d="M818 370C835 378 855 386 870 387C890 385 920 385 960 398C1000 410 1050 450 1085 497" fill="none" stroke="#24103c" stroke-width="1.3"/>
            <path d="M818 250C860 270 930 305 985 352C1040 400 1085 450 1085 497" fill="none" stroke="#1c1428" stroke-width="1"/>
            <path d="M818 518C860 533 910 546 957 546C985 546 1010 542 1035 528L1085 497" fill="none" stroke="#201828" stroke-width="1.6"/>
            <path d="M818 515C860 530 910 541 957 543C985 543 1010 537 1041 523" fill="none" stroke="#3ce83c" stroke-width="3.4"/>
            <path d="M880 534C910 541 930 544 957 545C975 545 990 543 1010 537" fill="none" stroke="#3ce83c" stroke-width="1.6" stroke-dasharray="3 9"/>
          </svg>

          <svg class="navcube" viewBox="0 0 540 510">
            <g class="nc-face">
              <path d="M240 68 282 22 324 68Z"/>
              <path d="M240 430H324L282 476Z"/>
              <path d="M102 208V290L54 250Z"/>
              <path d="M464 208V290L510 250Z"/>
              <path d="M222 44V70C192 76 168 92 152 118L162 124 112 142 120 88 130 96C148 68 182 52 222 44Z"/>
              <path d="M342 46 338 72C368 80 394 96 410 120L402 126 452 142 444 88 434 96C416 68 382 54 342 46Z"/>
              <circle cx="480" cy="50" r="22"/>
              <path d="M262 102H328L380 150 415 195 420 310 385 345 310 393H250L160 335 145 305V195L185 150Z"/>
              <path d="M404 398 438 378 472 396V424L438 442 404 424Z"/>
            </g>
            <g class="nc-line">
              <path d="M185 150 180 180 165 208M145 195 165 208 248 243M180 180 265 217"/>
              <path d="M380 150 380 180 400 208M415 195 400 208 318 240M380 180 302 217"/>
              <path d="M265 217H302L318 240 302 278H262L248 243Z"/>
              <path d="M262 278V372H302V278M250 393 262 372H302L310 393"/>
              <path d="M404 398 438 416 472 396M438 416V442"/>
            </g>
            <text class="nc-text" transform="translate(243 152) rotate(27) scale(1 .75)">TOP</text>
            <text class="nc-text" transform="translate(148 282) rotate(23)">FRONT</text>
            <text class="nc-text" transform="translate(312 336) rotate(-28)">RIGHT</text>
            <path d="M114 345V200" stroke="#0808f0" stroke-width="4"/>
            <path d="M114 345 160 320" stroke="#10c010" stroke-width="4"/>
            <path d="M160 320 240 275" stroke="#80f060" stroke-width="4"/>
            <path d="M114 345 240 418" stroke="#e80808" stroke-width="4"/>
          </svg>

          <svg class="axes" viewBox="0 -5 32 46">
            <path d="M3 27V11" stroke="#2020a0" stroke-width="1.3"/>
            <path d="M3 27 13 21" stroke="#208020" stroke-width="1.1"/>
            <path d="M3 27 15 34" stroke="#902020" stroke-width="1.1"/>
            <path d="M15 19l-4 1 2 2zM17 35l-4-1 1-2z" fill="#702020"/>
            <text x="3" y="11">Z</text><text x="13" y="21">Y</text><text x="18" y="37">X</text>
          </svg>
        </div>

        <div class="doc-tabs">
          <svg class="doc-logo"><use href="#fc"/></svg>
          <span>RotationSweep_FaceSupport : 1*</span>
          <svg class="doc-x" viewBox="0 0 12 12"><path d="M1 1l10 10M11 1 1 11"/></svg>
        </div>
      </section>
    </div>

    <footer class="status">
      <span class="status-text">Preselected: rotsweepwithfacesupport1.Rotation_Sweep.Face2 (23.969122 mm, 9.361055 mm, 15.867620 mm)</span>
      <span class="st-btn b-blender">
        <svg class="mouse" viewBox="0 0 10 14"><rect x="1" y="1" width="8" height="12" rx="4"/><path d="M5 3v3"/></svg>
        Blender<i class="caret"></i>
      </span>
      <span class="st-btn b-size">126,63 mm x 71,68 mm<i class="caret"></i></span>
    </footer>
  </div>

  <div class="dialog">
    <div class="dlg-title">
      <svg class="logo"><use href="#fc"/></svg>
      <span class="circle-btn"></span>
      <span class="dlg-name">Link</span>
      <div class="win-btns">
        <svg class="wb" viewBox="0 0 12 12"><path d="M1 6h10"/></svg>
        <svg class="wb" viewBox="0 0 12 12"><path d="M1.5 1.5h9v9h-9z"/></svg>
        <svg class="wb" viewBox="0 0 12 12"><path d="M1 1l10 10M11 1 1 11"/></svg>
      </div>
    </div>
    <div class="dlg-body">
      <div class="link-tree">
        <div class="lrow root">
          <svg class="lchev" viewBox="0 0 10 10"><path d="M1 3l4 4 4-4"/></svg>
          <svg class="li doc-ic"><use href="#doc"/></svg>
          RotationSweep_FaceSupport
        </div>
        <div class="lrow child"><span class="ltw"></span><svg class="li"><use href="#ellipse"/></svg>Ellipse</div>
        <div class="lrow child"><span class="ltw arrow"></span><svg class="li"><use href="#offset"/></svg>Offset2D</div>
        <div class="lrow child"><span class="ltw arrow"></span><svg class="li"><use href="#joint"/></svg>JoinCurve</div>
        <div class="lrow child hl"><span class="ltw arrow"></span><svg class="li"><use href="#ruled"/></svg>Ruled_Surface</div>
        <div class="lrow child"><span class="ltw arrow"></span><svg class="li"><use href="#sketch-r"/></svg>Sketch</div>
        <div class="lrow child"><span class="ltw arrow"></span><svg class="li"><use href="#sketch-r"/></svg>Sketch001</div>
        <div class="lrow child"><span class="ltw arrow"></span><svg class="li"><use href="#joint"/></svg>JoinCurve001</div>
        <div class="lrow child end"><span class="ltw arrow"></span><svg class="li"><use href="#joint"/></svg>JoinCurve002</div>
      </div>

      <div class="checks">
        <label class="chk"><span class="box"></span>Türüne göre filtre</label>
        <label class="chk"><span class="box"></span>Alt-nesne seçimini eşzamanla</label>
      </div>

      <div class="search">
        <span>Ara</span>
        <div class="search-box"></div>
      </div>

      <div class="btn-row">
        <span class="btn">Temizle</span>
        <span class="btn-gap"></span>
        <span class="btn">Sıfırla</span>
        <span class="btn"><svg class="bi"><use href="#ok"/></svg><u>T</u>amam</span>
        <span class="btn"><svg class="bi"><use href="#cancel"/></svg>İ<u>p</u>tal</span>
      </div>
    </div>
  </div>

</body>
</html>
```

FILE: styles.css

```css
* { box-sizing: border-box; }
html, body { margin: 0; height: 686px; overflow: hidden; }
body { position: relative; background: #2a2e39; color: #232629; font-family: "Noto Sans", sans-serif; font-size: 13px; line-height: 18px; }
i { font-style: normal; }
u { text-underline-offset: 2px; text-decoration-thickness: 1px; }
.sheet { position: absolute; width: 0; height: 0; }
.big-s { font-family: "DejaVu Sans", sans-serif; font-size: 18px; fill: #777; }

/* window title */
.titlebar { height: 29px; display: flex; align-items: center; padding-left: 9px; position: relative; }
.logo { width: 22px; height: 22px; flex: none; }
.circle-btn { width: 12px; height: 12px; margin-left: 16px; border: 1.5px solid #8f929a; border-radius: 50%; flex: none; }
.title-text { position: absolute; left: 0; right: 31px; text-align: center; font-weight: 700; color: #c8cacd; pointer-events: none; }
.win-btns { margin-left: auto; display: flex; gap: 26px; padding-right: 9px; }
.wb { width: 10px; height: 10px; fill: none; stroke: #80838b; stroke-width: 1.3; }

.app { margin: 0 3px 2px 5px; height: 655px; background: #f5f5f5; display: flex; flex-direction: column; }

/* menu */
.menubar { height: 25px; display: flex; align-items: center; padding: 0 0 2px 10px; flex: none; }
.menubar span { margin-right: 14.5px; white-space: nowrap; }

/* toolbars */
.toolbar { height: 28px; display: flex; align-items: center; flex: none; }
.ic { width: 22px; height: 22px; margin: 0 2.1px; flex: none; }
.grip { display: block; width: 5px; height: 20px; margin: 0 4px 0 6px; flex: none;
  background-image: radial-gradient(circle, #b4b4b4 1px, transparent 1.2px);
  background-size: 2.5px 3px; }
.grip.gn { margin: 0 3px 0 6px; }
.grip.gs { margin: 0 4px 0 5px; }
.grip.gm { margin: 0 3px 0 3px; }
.grip.gq { margin: 0 4px 0 4px; }
.grip.gt { margin: 0 2px 0 9px; }
.sp8 { width: 8px; flex: none; }
.sp9 { width: 9px; flex: none; }
.sp10 { width: 10px; flex: none; }
.sp12 { width: 12px; flex: none; }
.more { font-size: 14px; color: #555; margin-left: 4px; flex: none; }
.more.m1 { margin-left: 16px; }

.wb-combo { width: 132px; height: 28px; margin: 0 1px; display: flex; align-items: center; background: #fff; border: 1px solid #cfcfcf; border-radius: 3px; flex: none; }
.combo-ic { width: 16px; height: 16px; margin-left: 3px; flex: none; }
.combo-text { margin-left: 5px; flex: 1; }
.combo-arrow { width: 16px; height: 100%; background: #c8c8c8; display: flex; align-items: center; justify-content: center; }
.combo-arrow svg { width: 9px; height: 6px; fill: none; stroke: #8a8a8a; }

/* main part */
.work { flex: 1; display: flex; min-height: 0; }
.dock { width: 364px; flex: none; display: flex; flex-direction: column; }
.center { flex: 1; display: flex; flex-direction: column; min-width: 0; }

.dock-title { height: 24px; display: flex; align-items: center; font-weight: 700; position: relative; flex: none; }
.dock-title span { width: 332px; text-align: center; }
.dock-btn { width: 9px; height: 9px; margin-right: 5px; fill: none; stroke: #a0a0a0; flex: none; }

.tabs { display: flex; flex: none; }
.tab { padding: 2px 5.5px; height: 24px; border-radius: 4px; white-space: nowrap; }
.tab.active { background: #d4d4d4; }
.top-tabs { height: 28px; padding: 2px 0 0 1.5px; }
.top-tabs .tab { margin-right: 2px; }
.bottom-tabs { height: 29px; padding-left: 5px; gap: 2px; }
.bottom-tabs .tab { padding: 3px 4.5px; }

.pane { display: flex; flex: none; }
.tree-pane { height: 219px; }
.prop-pane { height: 232px; }

.tree { width: 335px; margin-left: 2px; }
.row { height: 20px; display: flex; align-items: center; white-space: nowrap; }
.gutter { height: 20px; flex: none; display: flex; align-items: center; background-repeat: no-repeat; }
.lv1 .gutter { width: 43px; padding-left: 25px;
  background-image: linear-gradient(#cfcfcf, #cfcfcf), linear-gradient(#cfcfcf, #cfcfcf);
  background-size: 1px 100%, 13px 1px; background-position: 29px 0, 29px 10px; }
.lv1.end .gutter { background-size: 1px 11px, 13px 1px; }
.lv2 .gutter { width: 63px;
  background-image: linear-gradient(#cfcfcf, #cfcfcf), linear-gradient(#cfcfcf, #cfcfcf), linear-gradient(#cfcfcf, #cfcfcf);
  background-size: 1px 100%, 1px 100%, 13px 1px; background-position: 29px 0, 49px 0, 49px 10px; }
.lv2.end .gutter { background-size: 1px 100%, 1px 11px, 13px 1px; }
.chev { width: 9px; height: 9px; fill: none; stroke: #a8a8a8; stroke-width: 1.3; }
.cell { display: flex; align-items: center; height: 20px; }
.muted { color: #8a8a8a; }
.ti { width: 16px; height: 16px; margin-right: 6px; flex: none; }
.ti-stack { position: relative; display: flex; flex: none; }
.vis-badge { position: absolute; left: -1px; top: 7px; width: 9px; height: 9px; border-radius: 50%; background: #e000d8; border: 2px solid #e000d8; box-shadow: inset 0 2px 0 #fff; }
.vis-ring { position: absolute; left: 8px; top: 8px; width: 7px; height: 9px; border: 2px solid #e8c028; border-radius: 50%; }
.picked .gutter { width: 40px; background-color: #8ab4e8; }
.picked .cell { width: 193px; padding-left: 3px; background: #c0c1bf; }

.scroll { width: 12px; margin-left: 5px; display: flex; flex-direction: column; align-items: center; flex: none; }
.sc-arrow { width: 9px; height: 6px; fill: none; stroke: #3a3a3a; stroke-width: 2; flex: none; }
.thumb { display: block; width: 12px; background: #d2d2d2; border-radius: 3px; flex: none; }
.s-tree .thumb { height: 169px; margin: 27px 0 8px; }
.s-prop { margin-left: 3px; }
.s-prop .thumb { height: 150px; margin: 57px 0 9px; }

.splitter { height: 8px; display: flex; justify-content: center; align-items: center; padding: 0 26px 1px 0; flex: none; }
.splitter span { width: 38px; height: 1px; background: repeating-linear-gradient(90deg, #888 0 6px, transparent 6px 8px); }

.props { width: 337px; margin-left: 2px; flex: none; }
.prop-head { height: 22px; display: flex; border: 1px solid #d0d0d0; font-weight: 700; align-items: center; }
.h1 { width: 133px; padding-left: 16px; border-right: 1px solid #d0d0d0; }
.h2 { padding-left: 10px; }
.prop-sliver { height: 3px; margin-right: 2px; border-bottom: 1px solid #d0d0d0; background: linear-gradient(#cfcfcf, #cfcfcf) 131px 0/1px 100% no-repeat, linear-gradient(#cfcfcf, #cfcfcf) 20px 0/1px 100% no-repeat; }
.prop-group { height: 23px; margin-right: 2px; padding: 2px 0 0 3px; font-weight: 700; border-bottom: 1px solid #d0d0d0; }
.prop-row { height: 23px; margin-right: 2px; display: flex; border-bottom: 1px solid #d0d0d0; }
.prop-row.alt { background: #cdcdcd; }
.p-name { width: 131px; height: 100%; padding: 2px 0 0 23px; flex: none; border-right: 1px solid #d0d0d0;
  background: linear-gradient(#d0d0d0, #d0d0d0) 9px 0/1px 100% no-repeat, linear-gradient(#d0d0d0, #d0d0d0) 9px 11px/11px 1px no-repeat; }
.last .p-name { background-size: 1px 12px, 11px 1px; }
.p-name.sel { background-color: #8ab4e8; }
.p-val { flex: 1; padding: 2px 0 0 4px; white-space: nowrap; overflow: hidden; display: flex; }
.dots { width: 22px; margin: -2px 0 0 auto; height: 22px; font-weight: 400; text-align: center; background: #d6d6d6; line-height: 24px; }

/* 3d view */
.view { height: 513px; flex: none; position: relative; overflow: hidden; background: linear-gradient(#333364, #9a9aae); }
.shape { position: absolute; left: 0; top: 0; width: 908px; height: 513px; }
.navcube { position: absolute; left: 731px; top: 0; width: 180px; height: 170px; }
.nc-face { fill: #9293ad; stroke: #111; stroke-width: 3; }
.nc-line { fill: none; stroke: #111; stroke-width: 3; }
.nc-text { font-family: "Liberation Sans", sans-serif; font-size: 36px; fill: #45455c; }
.axes { position: absolute; left: 879px; top: 456px; width: 32px; height: 46px; }
.axes text { font-family: "Noto Sans", sans-serif; font-size: 10px; fill: #111; }

.doc-tabs { height: 27px; display: flex; align-items: center; padding: 0 0 1px 327px; flex: none; }
.doc-logo { width: 16px; height: 16px; margin-right: 11px; flex: none; }
.doc-x { width: 13px; height: 12px; margin-left: 13px; fill: none; stroke: #999; stroke-width: 2.4; flex: none; }

/* status bar */
.status { height: 34px; display: flex; align-items: flex-start; padding: 4px 19px 0 7px; gap: 6px; flex: none; }
.status-text { flex: 1; padding-top: 2px; white-space: nowrap; }
.st-btn { height: 22px; display: flex; align-items: center; background: #d4d4d4; border-radius: 3px; white-space: nowrap; flex: none; padding: 0 5px; }
.b-blender { width: 91px; padding-left: 10px; }
.b-size { width: 159px; padding: 0 2px; }
.mouse { width: 9px; height: 13px; margin-right: 6px; fill: none; stroke: #333; }
.caret { width: 0; height: 0; margin-left: auto; border: 4px solid transparent; border-top-color: #777; border-bottom: 0; }

/* Link dialog, floats over the view */
.dialog { position: absolute; left: 375px; top: 128px; width: 443px; height: 472px; background: #2a2e39; box-shadow: 0 2px 7px rgba(0, 0, 0, .45); display: flex; flex-direction: column; padding: 0 4px 0 3px; }
.dlg-title { height: 30px; flex: none; display: flex; align-items: center; position: relative; margin: 0 -4px 0 -3px; padding-left: 8px; }
.dlg-name { position: absolute; left: 0; right: 34px; text-align: center; font-weight: 700; color: #aeb0b5; pointer-events: none; }
.dlg-title .circle-btn { margin-left: 12px; border-color: #b8bac0; }
.dlg-title .win-btns { gap: 23px; padding-right: 15px; }
.dlg-title .wb { stroke: #c8cacd; }
.dlg-title .logo { width: 20px; height: 20px; }
.dlg-body { flex: 1; background: #f5f5f5; padding: 11px 11px 0 12px; border-bottom: 4px solid #fafafa; }

.link-tree { height: 329px; width: 413px; border: 1px solid #e000e8; border-radius: 1px; padding-right: 1px; }
.lrow { height: 20px; display: flex; align-items: center; white-space: nowrap; }
.root { padding-left: 2px; margin-top: -1px; }
.lchev { width: 11px; height: 10px; fill: none; stroke: #a8a8a8; stroke-width: 1.3; margin-right: 9px; flex: none; }
.li { width: 16px; height: 16px; margin-right: 6px; flex: none; }
.doc-ic { width: 15px; height: 15px; }
.ltw { width: 41px; height: 20px; flex: none; position: relative;
  background: linear-gradient(#d0d0d0, #d0d0d0) 27px 0/1px 100% no-repeat, linear-gradient(#d0d0d0, #d0d0d0) 27px 10px/13px 1px no-repeat; }
.end .ltw { background-size: 1px 11px, 13px 1px; }
.ltw.arrow::after { content: ""; position: absolute; left: 23px; top: 6px; width: 6px; height: 6px; border-top: 1.5px solid #999; border-right: 1.5px solid #999; transform: rotate(45deg); }
.hl { background: #8ab4e8; }

.checks { height: 34px; margin-bottom: -1px; display: flex; justify-content: space-between; align-items: center; padding-right: 6px; }
.chk { display: flex; align-items: center; white-space: nowrap; }
.box { width: 12px; height: 12px; margin-right: 6px; background: #fff; border: 1.3px solid #333; border-radius: 2px; flex: none; }

.search { height: 26px; display: flex; align-items: center; margin-left: -1px; padding-left: 5px; width: 414px; }
.search span { width: 33px; flex: none; }
.search-box { flex: 1; height: 26px; background: #fff; border: 1px solid #cccccc; border-radius: 3px; }

.btn-row { display: flex; gap: 6px; margin: 6px 0 0 -1px; width: 414px; }
.btn { width: 84px; height: 22px; display: flex; align-items: center; justify-content: center; background: #d0d0d0; border-radius: 2px; flex: none; white-space: nowrap; }
.btn-gap { flex: 1; }
.bi { width: 17px; height: 17px; margin-right: 1px; flex: none; }
```
